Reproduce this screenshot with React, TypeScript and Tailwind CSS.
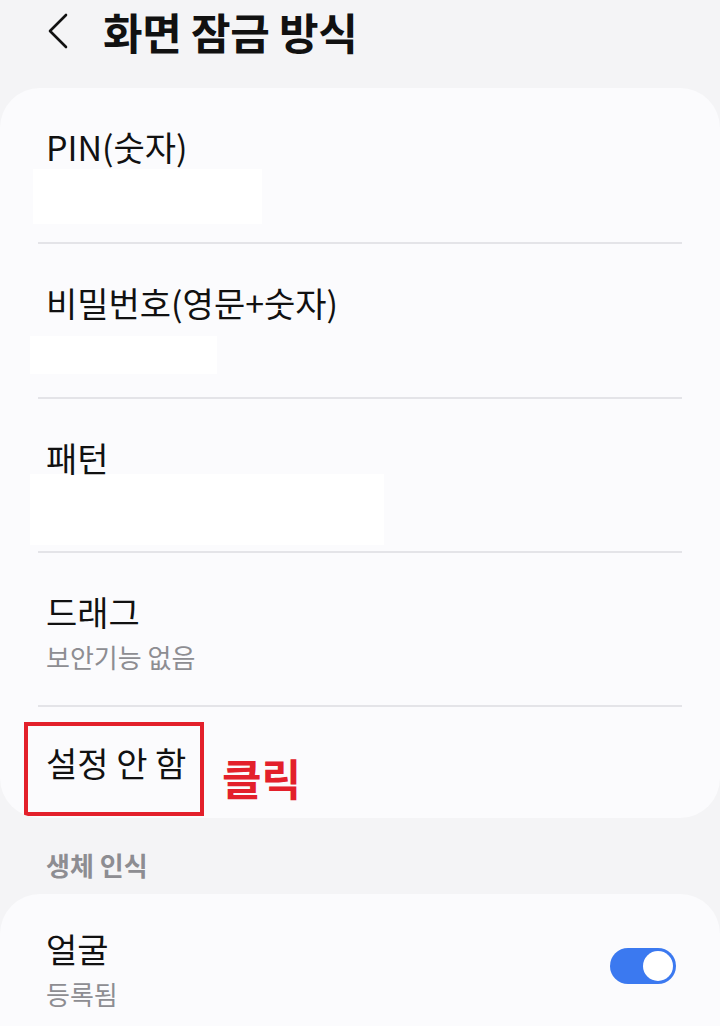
import React from 'react'

const font = { fontFamily: '"Noto Sans CJK KR", "Noto Sans", sans-serif' }

function Divider() {
  return <div className="mx-[38px] h-[2px] bg-[#e4e4e8]" />
}

function Row({ title, sub, children, h }: { title: string; sub?: string; children?: React.ReactNode; h: string }) {
  return (
    <div className={`${h} pl-[46px] pr-[46px]`}>
      <div className="pt-[37px] text-[34px] leading-[44px] text-[#111]">{title}</div>
      {sub && <div className="mt-[7px] text-[26px] leading-[32px] text-[#8d8d92]">{sub}</div>}
      {children}
    </div>
  )
}

export default function App() {
  return (
    <div className="w-[720px] h-[1026px] overflow-hidden bg-[#f4f4f6]" style={font}>
      {/* header */}
      <div className="flex h-[88px] items-start">
        <svg className="ml-[44px] mt-[12px]" width="28" height="38" viewBox="0 0 28 38">
          <polyline points="22,3 6,19 22,35" fill="none" stroke="#111" strokeWidth="2.6" strokeLinecap="round" strokeLinejoin="round" />
        </svg>
        <div className="ml-[31px] text-[43px] leading-[62px] font-bold text-[#111] tracking-[-0.3px]">화면 잠금 방식</div>
      </div>

      {/* lock types */}
      <div className="rounded-[40px] bg-[#fbfbfd] overflow-hidden">
        <Row title="PIN(숫자)" h="h-[154px]">
          <div className="ml-[-13px] h-[55px] w-[229px] bg-white" />
        </Row>
        <Divider />
        <Row title="비밀번호(영문+숫자)" h="h-[153px]">
          <div className="ml-[-16px] mt-[11px] h-[38px] w-[187px] bg-white" />
        </Row>
        <Divider />
        <Row title="패턴" h="h-[152px]">
          <div className="ml-[-16px] mt-[-6px] h-[71px] w-[354px] bg-white" />
        </Row>
        <Divider />
        <Row title="드래그" sub="보안기능 없음" h="h-[152px]" />
        <Divider />
        <div className="relative h-[111px] pl-[46px]">
          <div className="pt-[34px] text-[34px] leading-[44px] text-[#111]">설정 안 함</div>
          <div className="absolute left-[24px] top-[15px] h-[94px] w-[180px] border-[4px] border-[#e3202b]" />
          <div className="absolute left-[222px] top-[39px] text-[43px] leading-[62px] font-bold text-[#e3202b]">클릭</div>
        </div>
      </div>

      {/* biometrics */}
      <div className="h-[76px] pl-[46px] pt-[31px] text-[26px] leading-[32px] font-semibold text-[#8d8d92]">생체 인식</div>

      <div className="rounded-t-[40px] bg-[#fbfbfd] h-[200px]">
        <div className="flex items-start pl-[46px] pr-[44px]">
          <div className="flex-1">
            <div className="pt-[33px] text-[34px] leading-[44px] text-[#111]">얼굴</div>
            <div className="mt-[7px] text-[26px] leading-[32px] text-[#8d8d92]">등록됨</div>
          </div>
          <div className="mt-[54px] flex h-[36px] w-[66px] items-center justify-end rounded-full bg-[#3b79f0] pr-[3px]">
            <div className="h-[30px] w-[30px] rounded-full bg-white" />
          </div>
        </div>
      </div>
    </div>
  )
}
